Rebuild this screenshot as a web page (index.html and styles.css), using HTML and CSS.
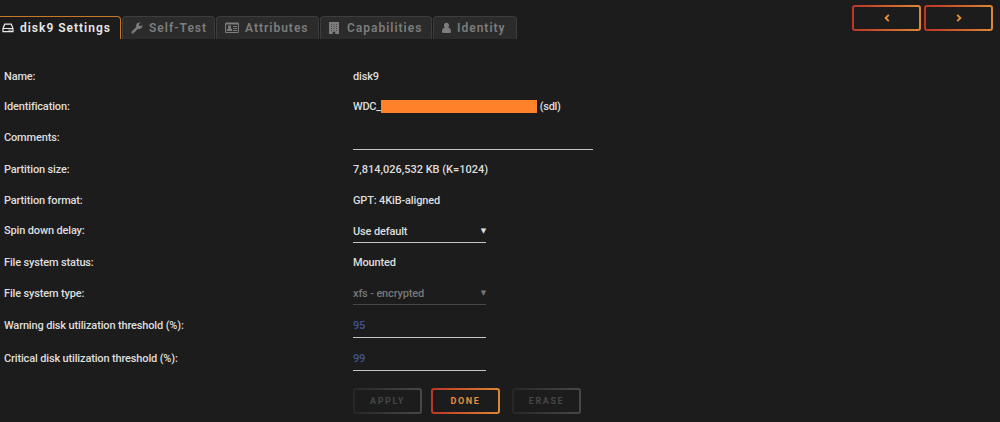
FILE: index.html
```html
<!DOCTYPE html>
<html lang="en">
<head>
    <meta charset="UTF-8">
    <meta name="viewport" content="width=device-width, initial-scale=1.0">
    <title>disk9 Settings</title>
    <link rel="stylesheet" href="styles.css">
</head>
<body>
    <header class="topbar">
        <nav class="tabs">
            <a class="tab tab-settings active">
                <svg class="icon" width="12" height="12" viewBox="0 0 12 12" fill="none" stroke="currentColor" stroke-width="1.2"><path d="M1 6.5 L2.7 2.2 H9.3 L11 6.5 V9.6 H1 Z M1 6.5 H11"/><path d="M6.5 8.1 H7.5 M8.5 8.1 H9.5"/></svg>
                <span>disk9 Settings</span>
            </a>
            <a class="tab tab-test">
                <svg class="icon" width="12" height="12" viewBox="0 0 12 12"><path fill="currentColor" fill-rule="evenodd" d="M11.4 3.1 L9.5 4.3 L8 3.5 V1.8 L9.9 .7 C8.2 -.1 5.1 1 5.1 3.8 L5.3 4.9 L.7 9.4 C-.5 10.7 1.3 12.5 2.6 11.3 L7.1 6.8 C9.5 7.5 11.7 5.9 11.4 3.1 Z M1.6 9.8 H2.4 V10.6 H1.6 Z"/></svg>
                <span>Self-Test</span>
            </a>
            <a class="tab tab-attributes">
                <svg class="icon" width="14" height="12" viewBox="0 0 14 12"><rect x=".6" y="1.1" width="12.8" height="9.4" rx=".7" fill="none" stroke="currentColor" stroke-width="1.1"/><path fill="currentColor" d="M1 1h12v1.4H1z M2.1 9V7.2l1.4-1C2.6 5.2 2.9 3.300 4.600 3.300S6.600 5.200 5.700 6.200l1.400 1V9z M8 3.900h4v1.200H8z M8 5.900h4v1.200H8z M8 7.900h4v1H8z"/></svg>
                <span>Attributes</span>
            </a>
            <a class="tab tab-capabilities">
                <svg class="icon" width="10" height="12" viewBox="0 0 10 12"><path fill="currentColor" fill-rule="evenodd" d="M0 0h10v12H6.200V9.700H3.800V12H0z M2 2v.7h.8V2z M4.600 2v.7h.8V2z M7.200 2v.7H8V2z M2 4v.7h.8V4z M4.600 4v.7h.8V4z M7.200 4v.7H8V4z M2 6v.7h.8V6z M4.600 6v.7h.8V6z M7.200 6v.7H8V6z M2 8v.7h.8V8z M7.200 8v.7H8V8z"/></svg>
                <span>Capabilities</span>
            </a>
            <a class="tab tab-identity">
                <svg class="icon" width="9" height="12" viewBox="0 0 9 12"><path fill="currentColor" d="M2 3.400C2 1.800 2.900.7 4.500.7S7 1.800 7 3.400c0 1-.4 1.900-1 2.400 2 0 3 1.400 3 3.600C9 10.600 8.500 11 7.600 11H1.400C.5 11 0 10.600 0 9.400 0 7.200 1 5.800 3 5.800 2.400 5.300 2 4.400 2 3.400z"/></svg>
                <span>Identity</span>
            </a>
        </nav>
        <div class="pager">
            <button class="btn" aria-label="Previous disk">
                <svg width="6" height="8" viewBox="0 0 6 8"><path d="M4.800 .8 L1.600 4 L4.800 7.200" fill="none" stroke="currentColor" stroke-width="1.900"/></svg>
            </button>
            <button class="btn" aria-label="Next disk">
                <svg width="6" height="8" viewBox="0 0 6 8"><path d="M1.200 .8 L4.400 4 L1.200 7.200" fill="none" stroke="currentColor" stroke-width="1.900"/></svg>
            </button>
        </div>
    </header>

    <form class="settings">
        <div class="row">
            <span class="label">Name:</span>
            <span>disk9</span>
        </div>
        <div class="row">
            <span class="label">Identification:</span>
            <span class="ident">WDC_<i class="redacted"></i>(sdl)</span>
        </div>
        <div class="row row-comments">
            <label class="label" for="comments">Comments:</label>
            <input class="wide" type="text" id="comments">
        </div>
        <div class="row row-size">
            <span class="label">Partition size:</span>
            <span class="size">7,814,026,532 KB (K=1024)</span>
        </div>
        <div class="row">
            <span class="label">Partition format:</span>
            <span>GPT: 4KiB-aligned</span>
        </div>
        <div class="row row-spin">
            <label class="label" for="spindown">Spin down delay:</label>
            <span class="select">
                <select id="spindown"><option>Use default</option></select>
                <span class="arrow">▼</span>
            </span>
        </div>
        <div class="row row-status">
            <span class="label">File system status:</span>
            <span>Mounted</span>
        </div>
        <div class="row">
            <label class="label" for="fstype">File system type:</label>
            <span class="select disabled">
                <select id="fstype" disabled><option>xfs - encrypted</option></select>
                <span class="arrow">▼</span>
            </span>
        </div>
        <div class="row row-threshold">
            <label class="label" for="warning">Warning disk utilization threshold (%):</label>
            <input type="text" id="warning" placeholder="95">
        </div>
        <div class="row row-critical">
            <label class="label" for="critical">Critical disk utilization threshold (%):</label>
            <input type="text" id="critical" placeholder="99">
        </div>
        <div class="actions">
            <button class="btn" type="submit" disabled>APPLY</button>
            <button class="btn" type="button">DONE</button>
            <button class="btn btn-erase" type="button" disabled>ERASE</button>
        </div>
    </form>
</body>
</html>
```
FILE: styles.css
```css
* {
    margin: 0;
    padding: 0;
    box-sizing: border-box;
}

body {
    height: 422px;
    overflow: hidden;
    background-color: #1c1c1c;
    color: #dedede;
    font-family: Roboto, "Noto Sans", sans-serif;
    font-size: 11px;
    font-weight: 500;
    letter-spacing: -0.15px;
}

.topbar {
    display: flex;
    justify-content: space-between;
    height: 61px;
    padding-right: 7px;
}

.tabs {
    display: flex;
    gap: 1px;
    padding-top: 16px;
}

.tab {
    display: flex;
    align-items: center;
    height: 23px;
    padding-left: 8px;
    border: 1px solid #3d3d3d;
    border-bottom: none;
    border-radius: 4px 4px 0 0;
    background-color: #2b2b2b;
    color: #7d7d7d;
    font-size: 12px;
    font-weight: 600;
    letter-spacing: 1px;
    white-space: nowrap;
}

.tab.active {
    border-color: #c87628;
    border-left: none;
    border-top-left-radius: 0;
    background-color: #1c1c1c;
    color: #e8e8e8;
}

.icon {
    flex: none;
    margin-right: 6px;
}

.tab-settings {
    width: 121px;
    padding-left: 2px;
}

.tab-test {
    width: 93px;
}

.tab-attributes {
    width: 103px;
}

.tab-capabilities {
    width: 112px;
}

.tab-identity {
    width: 84px;
}

.tab-capabilities .icon {
    margin-right: 8px;
}

.pager {
    display: flex;
    gap: 3px;
    padding-top: 5px;
}

.btn {
    display: flex;
    align-items: center;
    justify-content: center;
    width: 69px;
    height: 26px;
    border: 2px solid transparent;
    border-radius: 3px;
    background: linear-gradient(#1c1c1c, #1c1c1c) padding-box, linear-gradient(90deg, #bd3528, #dc8835) border-box;
    color: #e88f38;
    font-family: Roboto, "Noto Sans", sans-serif;
    font-size: 9px;
    font-weight: 700;
    letter-spacing: 1.6px;
}

.btn:disabled {
    background: linear-gradient(#1c1c1c, #1c1c1c) padding-box, linear-gradient(90deg, #272727, #484848) border-box;
    color: #464646;
}

.row {
    display: flex;
    align-items: center;
    height: 30px;
    padding-left: 4px;
}

.row-comments,
.row-size,
.row-status,
.row-critical {
    height: 32px;
}

.row-spin {
    height: 31px;
}

.row-threshold {
    height: 34px;
}

.label {
    width: 349px;
}

.size {
    letter-spacing: 0;
}

.ident {
    display: flex;
    align-items: center;
    letter-spacing: -0.3px;
}

.redacted {
    width: 156px;
    height: 13px;
    margin-right: 3px;
    background-color: #ff8129;
}

input,
select {
    width: 133px;
    height: 26px;
    padding-top: 2px;
    border: none;
    border-bottom: 1px solid #c4c4c4;
    background: none;
    color: inherit;
    font: inherit;
    letter-spacing: inherit;
    outline: none;
}

input.wide {
    width: 240px;
}

input::placeholder {
    color: #42548f;
}

.select {
    position: relative;
}

select {
    display: block;
    height: 24px;
    appearance: none;
}

.arrow {
    position: absolute;
    top: 8px;
    right: 0;
    font-family: "DejaVu Sans", sans-serif;
    font-size: 7px;
    line-height: 8px;
}

.disabled {
    color: #777;
}

.disabled select {
    border-color: #484848;
    opacity: 1;
}

.actions {
    display: flex;
    gap: 9px;
    padding: 14px 0 0 353px;
}

.btn-erase {
    margin-left: 3px;
}
```
